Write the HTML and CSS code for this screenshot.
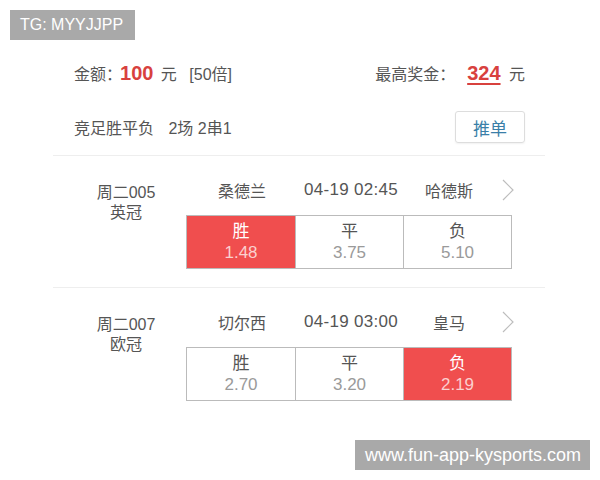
FILE: index.html
```html
<!DOCTYPE html>
<html>
<head>
<meta charset="utf-8">
<link rel="stylesheet" href="styles.css">
</head>
<body>
<div class="badge tg">TG: MYYJJPP</div>
<div class="page">
  <div class="row summary">
    <div class="amt">金额：<span class="num">100</span> 元 <span class="mult">[50倍]</span></div>
    <div class="prize">最高奖金：<span class="num under">324</span> 元</div>
  </div>
  <div class="row type">
    <div>竞足胜平负 <span class="gap">2场 2串1</span></div>
    <div class="btn">推单</div>
  </div>
  <div class="match">
    <div class="info"><div>周二005</div><div>英冠</div></div>
    <div class="body">
      <div class="teams">
        <span class="home">桑德兰</span><span class="time">04-19 02:45</span><span class="away">哈德斯</span>
        <svg class="chev" width="12" height="22" viewBox="0 0 12 22"><polyline points="1,1 11,11 1,21" fill="none" stroke="#bdbdbd" stroke-width="1.2"/></svg>
      </div>
      <div class="odds">
        <div class="cell on"><span class="lbl">胜</span><span class="val">1.48</span></div>
        <div class="cell"><span class="lbl">平</span><span class="val">3.75</span></div>
        <div class="cell"><span class="lbl">负</span><span class="val">5.10</span></div>
      </div>
    </div>
  </div>
  <div class="match">
    <div class="info"><div>周二007</div><div>欧冠</div></div>
    <div class="body">
      <div class="teams">
        <span class="home">切尔西</span><span class="time">04-19 03:00</span><span class="away">皇马</span>
        <svg class="chev" width="12" height="22" viewBox="0 0 12 22"><polyline points="1,1 11,11 1,21" fill="none" stroke="#bdbdbd" stroke-width="1.2"/></svg>
      </div>
      <div class="odds">
        <div class="cell"><span class="lbl">胜</span><span class="val">2.70</span></div>
        <div class="cell"><span class="lbl">平</span><span class="val">3.20</span></div>
        <div class="cell on"><span class="lbl">负</span><span class="val">2.19</span></div>
      </div>
    </div>
  </div>
</div>
<div class="badge site">www.fun-app-kysports.com</div>
</body>
</html>
```
FILE: styles.css
```css
html, body {
  margin: 0;
  background: #fff;
  font-family: "Liberation Sans", "Noto Sans CJK SC", sans-serif;
  color: #555;
}
body {
  width: 600px;
  height: 480px;
  position: relative;
  overflow: hidden;
}
.badge {
  position: absolute;
  background: #a9a9a9;
  color: #fff;
  font-size: 16px;
  line-height: 30px;
  height: 30px;
  padding: 0 10px;
}
.tg { left: 10px; top: 10px; width: 105px; }
.site { left: 355px; top: 440px; width: 215px; font-size: 18px; white-space: nowrap; }
.page {
  margin-left: 53px;
  width: 492px;
  padding-top: 56px;
}
.row {
  display: flex;
  justify-content: space-between;
  align-items: center;
  padding: 0 20px 0 21px;
  font-size: 16px;
}
.summary { height: 34px; }
.num {
  font-size: 20px;
  font-weight: bold;
  color: #d8413e;
  margin: 0 3px 0 -2px;
}
.mult { margin-left: 8px; }
.prize .num { margin: 0 4px 0 12px; }
.under { text-decoration: underline; text-underline-offset: 3px; text-decoration-thickness: 2px; }
.type { height: 34px; margin-top: 20px; }
.gap { margin-left: 10px; }
.btn {
  width: 68px;
  height: 30px;
  border: 1px solid #ddd;
  border-radius: 3px;
  display: flex;
  align-items: center;
  justify-content: center;
  color: #3a7fa8;
  font-size: 17px;
  box-shadow: 0 1px 2px rgba(0,0,0,0.06);
}
.match {
  border-top: 1px solid #eee;
  display: flex;
  height: 131px;
  margin-top: 11px;
}
.match + .match { margin-top: 0; }
.info {
  width: 133px;
  padding-left: 13px;
  box-sizing: border-box;
  text-align: center;
  font-size: 16px;
  line-height: 20px;
  padding-top: 27px;
}
.body { width: 326px; padding-top: 23px; }
.teams {
  display: flex;
  align-items: center;
  height: 22px;
  font-size: 16px;
  margin-bottom: 14px;
}
.teams > * { flex-shrink: 0; }
.home { width: 112px; text-align: center; }
.time { width: 106px; text-align: center; font-size: 17px; letter-spacing: 0.3px; white-space: nowrap; }
.away { width: 90px; text-align: center; }
.chev { margin-left: 8px; }
.odds {
  display: grid;
  grid-template-columns: 1fr 1fr 1fr;
  border: 1px solid #bbb;
  height: 52px;
}
.cell {
  display: flex;
  flex-direction: column;
  align-items: center;
  justify-content: center;
  border-left: 1px solid #bbb;
  line-height: 21px;
}
.cell:first-child { border-left: none; }
.lbl { font-size: 17px; color: #555; }
.val { font-size: 17px; color: #9a9a9a; }
.cell.on { background: #f04e4e; }
.cell.on .lbl { color: #fff; }
.cell.on .val { color: #fbd0cf; }
```
